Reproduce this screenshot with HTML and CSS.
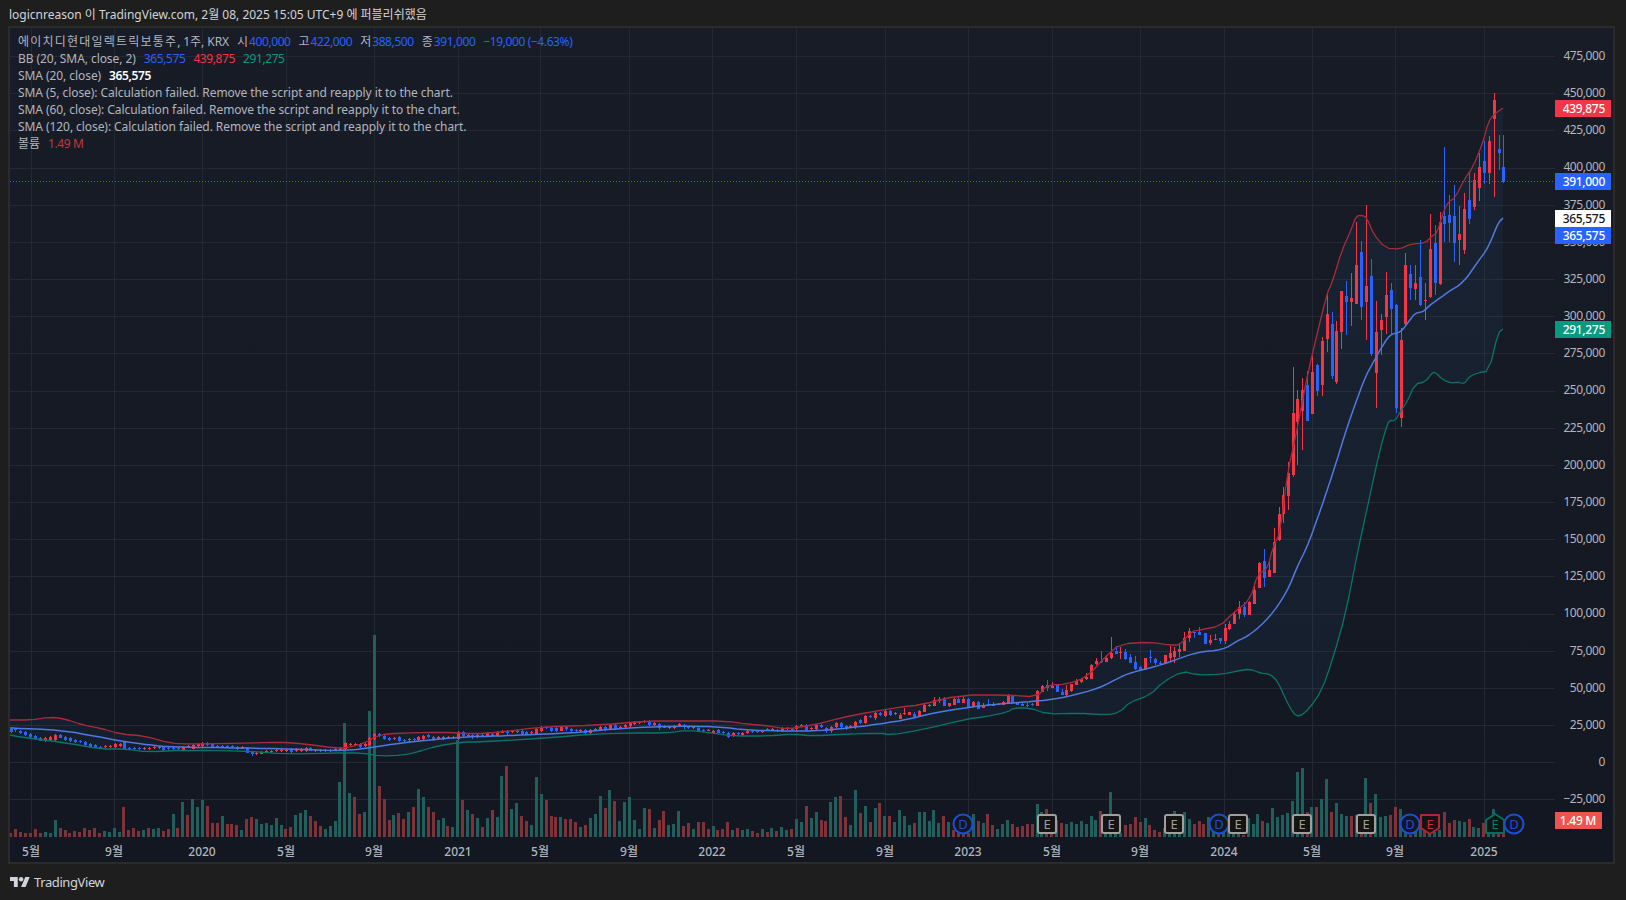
FILE: index.html
```html
<!DOCTYPE html>
<html lang="ko">
<head>
    <meta charset="UTF-8">
    <title>에이치디현대일렉트릭보통주 차트</title>
    <link rel="stylesheet" href="styles.css">
</head>
<body>

<div class="top-bar">logicnreason 이 TradingView.com, 2월 08, 2025 15:05 UTC+9 에 퍼블리쉬했음</div>

<div class="chart-box">
    <div class="pane">
        <svg id="chart" class="plot" viewBox="10 28 1545 809" width="1545" height="809"></svg>

        <div class="legend">
            <div class="legend-row">
                <span><span class="hangul">에이치디현대일렉트릭보통주</span>, 1주, KRX</span>
                <span class="ohlc">시<b class="blue">400,000</b></span>
                <span class="ohlc">고<b class="blue">422,000</b></span>
                <span class="ohlc">저<b class="blue">388,500</b></span>
                <span class="ohlc">종<b class="blue">391,000</b></span>
                <b class="blue">−19,000 (−4.63%)</b>
            </div>
            <div class="legend-row">
                <span>BB (20, SMA, close, 2)</span>
                <b class="blue">365,575</b>
                <b class="red">439,875</b>
                <b class="green">291,275</b>
            </div>
            <div class="legend-row">
                <span>SMA (20, close)</span>
                <b class="white">365,575</b>
            </div>
            <div class="legend-row">SMA (5, close): Calculation failed. Remove the script and reapply it to the chart.</div>
            <div class="legend-row">SMA (60, close): Calculation failed. Remove the script and reapply it to the chart.</div>
            <div class="legend-row">SMA (120, close): Calculation failed. Remove the script and reapply it to the chart.</div>
            <div class="legend-row">
                <span>볼륨</span>
                <b class="dim-red">1.49 M</b>
            </div>
        </div>
    </div>

    <div class="price-axis">
        <div class="price-labels">
            <span>475,000</span>
            <span>450,000</span>
            <span>425,000</span>
            <span>400,000</span>
            <span>375,000</span>
            <span>350,000</span>
            <span>325,000</span>
            <span>300,000</span>
            <span>275,000</span>
            <span>250,000</span>
            <span>225,000</span>
            <span>200,000</span>
            <span>175,000</span>
            <span>150,000</span>
            <span>125,000</span>
            <span>100,000</span>
            <span>75,000</span>
            <span>50,000</span>
            <span>25,000</span>
            <span>0</span>
            <span>−25,000</span>
        </div>
        <div class="tag tag-upper">439,875</div>
        <div class="tag tag-last">391,000</div>
        <div class="tag tag-sma">365,575</div>
        <div class="tag tag-basis">365,575</div>
        <div class="tag tag-lower">291,275</div>
        <div class="tag tag-volume">1.49 M</div>
    </div>

    <div id="timeAxis" class="time-axis"></div>
</div>

<div class="footer">
    <svg class="tv-logo" viewBox="0 4 36 18" width="20" height="10">
        <path d="M14 22H7V11H0V4h14v18zM28 22h-8l7.5-18h8L28 22z"/>
        <circle cx="20" cy="8" r="4"/>
    </svg>
    <span>TradingView</span>
</div>

<script src="chart.js"></script>
</body>
</html>
```

FILE: styles.css
```css
* {
    margin: 0;
    padding: 0;
    box-sizing: border-box;
}

body {
    width: 1626px;
    height: 900px;
    overflow: hidden;
    background: #1e1e1e;
    color: #b2b5be;
    font-family: "Noto Sans", "Noto Sans CJK KR", sans-serif;
    font-size: 12px;
}

.top-bar {
    height: 26px;
    padding-left: 9px;
    line-height: 29px;
    color: #d1d4dc;
}

.chart-box {
    position: relative;
    width: 1607px;
    height: 838px;
    margin-left: 8px;
    border: 2px solid #2b2b2b;
    background: linear-gradient(#181c27, #131722);
    display: grid;
    grid-template-columns: 1545px 58px;
    grid-template-rows: 809px 25px;
}

.pane {
    position: relative;
    grid-column: 1;
    grid-row: 1;
}

.plot {
    display: block;
}

.legend {
    position: absolute;
    top: 5px;
    left: 8px;
    line-height: 17px;
    letter-spacing: -0.07px;
}

.legend-row {
    display: flex;
    gap: 8px;
    height: 17px;
    white-space: nowrap;
}

.legend b {
    font-weight: 400;
    letter-spacing: -0.4px;
}

.hangul {
    letter-spacing: 1.2px;
}

.ohlc b {
    margin-left: 1px;
}

.blue { color: #2962ff; }
.red { color: #f23645; }
.green { color: #089981; }
.legend .white { color: #ffffff; font-weight: 600; }
.dim-red { color: #c2383f; }

.price-axis {
    position: relative;
    overflow: hidden;
    grid-column: 2;
    grid-row: 1 / 3;
}

.price-labels {
    display: flex;
    flex-direction: column;
    padding-top: 9px;
    padding-right: 8px;
    text-align: right;
    letter-spacing: -0.4px;
}

.price-labels span {
    height: 37.17px;
    line-height: 37.17px;
}

.tag {
    position: absolute;
    left: 0;
    width: 56px;
    height: 17px;
    line-height: 17px;
    padding-right: 6px;
    text-align: right;
    color: #ffffff;
    font-weight: 500;
    letter-spacing: -0.3px;
}

.tag-upper { top: 72px; background: #f23645; }
.tag-last { top: 145px; background: #2962ff; }
.tag-sma { top: 182px; background: #ffffff; color: #131722; }
.tag-basis { top: 199px; background: #2962ff; }
.tag-lower { top: 293px; background: #089981; }
.tag-volume { top: 784px; width: 47px; background: #ef5350; }

.time-axis {
    position: relative;
    grid-column: 1;
    grid-row: 2;
    line-height: 30px;
    font-weight: 500;
}

.time-axis span {
    position: absolute;
    top: 0;
    transform: translateX(-50%);
}

.footer {
    display: flex;
    align-items: center;
    gap: 4px;
    height: 36px;
    padding-left: 10px;
    color: #d1d4dc;
    font-size: 13px;
    letter-spacing: -0.4px;
}

.tv-logo {
    fill: #d1d4dc;
}
```

FILE: chart.js
```js
// price scale of the pane, in page pixels
function yOf(price) {
    return 762.3 - price * 1.4867 / 1000;
}

// traced from the chart. x, y are page pixels after x0 + x / k, y0 + y / k
// candle: colour + x, then top,bottom of the body, or high,top,bottom,low
const candleParts = [
    { x0: 0, y0: 620, k: 3, data: "b35,326,335 b47,326,331 b62,334,339 b77,336,344 b92,343,352 b107,348,356 b122,355,362 r137,354,362 r152,352,360 r167,344,360 b182,346,353 b197,351,360 b212,355,363 b227,360,365 b242,362,365 b257,366,375 b272,373,380 b287,376,383 b302,380,382 r317,378,380 r330,378,380 r345,373,381 r360,371,378 b373,366,388 b388,383,386 b403,384,386 b418,384,386 r433,384,386 r448,384,386 r463,381,385 r478,380,382 b490,381,390 b505,385,388 b520,385,388 b535,385,388 r550,381,389 r565,378,382 r580,376,386 r595,373,378 r607,368,378 b622,368,374 b637,372,380 b652,378,382 b667,378,382 b682,377,380 b697,378,382 b712,380,387 r727,382,386 b742,385,398 b757,395,403 r769,398,401 r784,397,401 r799,394,398 r814,392,395 r829,390,392 r844,390,392 r859,390,392 b874,386,395 r889,387,392 r904,387,392 r919,383,392 b931,385,392 r946,390,392 r961,390,392 r976,390,392 r991,390,392 r1006,388,391 r1021,385,390 r1036,370,388 r1051,372,375 r1066,372,374 b1081,373,382 r1096,372,377 r1108,353,375 r1123,342,356 b1138,343,348 b1153,348,358 b1168,353,359 r1183,353,357 b1198,352,363 b1213,360,362 r1228,356,361 b1243,357,360 r1255,350,360 r1270,347,357 b1285,345,350 b1300,350,359 r1315,352,357 r1330,350,356 r1345,350,354 r1360,350,353 r1375,335,357 b1390,335,347 r1405,345,348 b1417,344,352 r1432,345,352" },
    { x0: 480, y0: 690, k: 3, data: "b7,135,137 r22,130,138 b37,131,138 r52,127,137 r67,124,128 b82,122,130 r97,124,127 r112,122,124 b127,122,132 b139,126,131 r154,126,129 r169,116,132 r184,110,122 b199,110,112 b214,113,122 b229,113,122 r244,112,122 b259,110,118 b274,116,122 b289,120,122 r301,120,122 b316,120,130 r331,119,130 r346,116,120 r361,110,119 b376,110,118 r391,106,118 b406,106,117 r421,112,114 r436,105,112 r451,98,109 r463,96,102 r478,97,100 r493,93,97 b508,94,106 r523,99,106 b538,101,115 b553,109,113 r568,112,115 r583,107,113 r598,103,108 b613,104,112 b625,112,115 r640,112,114 b655,113,123 b670,119,121 r685,121,122 r700,122,128 b715,121,128 b730,125,127 b745,128,140 r760,128,136 b775,128,132 r787,128,134 r802,122,129 b817,122,125 b832,122,125 r847,122,126 b862,118,120 r877,118,122 b892,119,122 r907,114,122 r922,114,116 b937,116,119 r949,107,118 r964,106,109 b979,106,120 r994,114,117 r1009,106,118 b1024,106,112 b1039,113,124 r1054,110,124 r1069,100,112 b1084,100,112 b1099,108,116 r1111,108,112 r1126,95,112 b1141,90,100 r1156,78,98 b1171,78,82 r1186,68,85 b1201,70,76 r1216,64,78 b1231,64,76 r1246,70,72" },
    { x0: 900, y0: 590, k: 3, data: "r0,370,375,388,388 r13,355,368,372,375 r28,367,367,375,376 b43,367,372,382,382 r58,360,362,378,378 r73,340,345,366,367 r88,342,346,347,350 r103,322,330,348,348 r118,320,327,333,338 b133,322,323,348,348 r148,340,340,348,352 r163,324,326,345,345 b175,318,326,338,338 r190,318,327,338,340 b205,324,327,352,354 r220,333,337,350,352 b235,333,336,357,357 r250,340,344,354,355 b265,327,343,346,347 b280,337,345,346,347 r295,340,343,345,347 r310,332,337,344,345 r325,312,314,341,342 b337,315,315,340,340 b352,335,337,344,345 b367,337,342,347,349 b382,338,344,346,350 b397,338,342,345,348 r412,300,303,347,347 r427,286,288,305,307 b442,270,285,295,303 r457,277,287,293,295 b472,282,284,307,307 b487,297,306,315,315 r499,285,300,315,317 r514,282,283,303,305 r529,268,272,284,285 r544,265,268,276,280 r559,250,262,268,270 r574,222,226,267,268 r589,205,212,223,225 b604,183,212,216,218 r619,195,203,215,217 r634,140,190,204,207 b649,168,183,191,193 r661,172,185,186,207 b676,177,186,206,211" },
    { x0: 0, y0: 0, k: 1, data: "b1130,654,657,663,663 b1135,656,662,669,670 b1140,666,667,670,671 r1145,658,658,669,670 b1150,650,657,658,663 b1155,658,659,663,665 b1160,661,663,664,665 r1165,655,655,663,663 r1170,646,653,658,661 r1174,647,651,657,663 r1179,643,649,652,657 r1184,632,638,651,651 r1189,628,631,638,642 b1194,632,632,633,638 b1199,627,632,635,635 b1205,633,633,644,644 r1210,635,640,643,645 r1215,634,639,640,640 b1220,638,638,641,644 r1225,624,628,641,644 r1229,621,624,629,630 r1234,611,614,624,624 r1239,601,607,614,619 b1244,602,607,615,617 r1249,601,602,615,615 r1254,583,590,604,604 r1259,562,563,588,588 b1264,549,561,578,587 r1269,559,570,577,577 r1274,528,542,573,573 r1279,507,514,540,541 r1283,487,495,514,523 r1288,462,473,496,510 r1293,367,413,475,477 r1297,390,399,422,465 r1302,378,390,411,450 b1307,371,385,421,421 r1312,353,372,414,414 b1317,364,365,391,396 r1322,337,341,385,396 r1327,294,314,339,352 b1332,312,324,376,379 r1336,321,331,382,384 r1341,291,291,332,349 b1346,281,296,302,335 r1351,273,298,302,326 r1356,222,265,304,304 b1361,241,252,307,320 r1366,205,286,302,340 b1371,259,276,354,356 r1376,301,332,373,408 r1381,314,320,330,355 r1386,272,295,317,334 b1391,283,290,309,334 b1396,304,305,408,413 r1401,328,340,418,427 r1405,253,265,324,325 b1410,265,274,288,300 r1415,265,283,289,300 b1420,240,277,305,306 r1425,283,300,301,320 r1430,214,249,297,298 b1435,225,243,283,295 r1440,212,222,284,285 b1444,147,216,224,242 b1449,195,215,223,242 b1454,185,216,243,262 r1459,206,234,240,265 r1464,193,209,250,254 b1469,172,200,219,224 r1474,173,180,207,210 r1479,153,167,188,201 b1484,141,161,173,184 r1489,136,141,173,184 r1494,93,100,119,197 b1499,135,149,153,170 b1503,135,167,182,183" }
];

// volume: colour + x, then top of the bar
const volumeParts = [
    { x0: 0, y0: 620, data: "r31,640 r46,627 r61,636 r76,639 r91,639 r106,627 r121,639 g136,636 g151,639 g166,600 r181,624 r196,630 r208,639 r223,633 r238,636 r253,624 r268,630 r283,624 r298,639 g313,633 g328,636 g343,624 g358,636 r370,561 r385,630 r400,624 r415,633 g430,630 r445,624 g460,627 g475,624 r490,633 r505,627 g520,582 r532,624 g547,546 r562,585 g577,537 g592,561 g607,540 r622,558 r637,609 r652,609 g667,588 r682,612 r694,612 r709,615 g724,630 r739,597 r754,591 g769,597 g784,612 g799,609 g814,615 g829,594 g844,615 r856,627 r871,621 g886,585 g901,579 g916,570 r931,588 r946,603 r961,618 g976,627 g991,618 g1006,603 g1018,486 g1033,309 g1048,519 r1063,531 r1078,582 g1093,576 g1108,273 g1123,45 r1138,498 r1153,537 r1168,600 g1180,585 r1195,579 r1210,597 g1225,576 r1240,561 g1255,507 g1270,531 r1285,561 r1300,576 g1315,600 g1330,594 r1342,618 g1357,621 g1372,360 r1387,540 g1402,570 r1417,582 g1432,594" },
    { x0: 480, y0: 700, data: "r7,381 g22,354 r37,330 g52,351 g64,228 r79,198 g94,327 g109,309 r124,348 r139,363 g154,375 g169,231 g184,282 r199,300 r214,348 r226,351 g241,351 r256,357 r271,357 r286,366 g301,381 r316,375 g331,354 g346,342 g361,288 r376,324 g388,270 r403,303 g418,363 g433,306 g448,291 g463,360 g478,387 g493,324 r508,327 g523,384 r538,360 r550,333 g565,375 g580,372 g595,333 r610,378 r625,369 g640,387 r655,366 r670,366 r685,387 g700,378 r712,390 r727,387 r742,366 g757,390 r772,384 g787,390 g802,387 r817,393 r832,399 g847,387 r862,396 g874,384 r889,393 g904,381 g919,390 r934,387 g949,357 g964,366 r979,318 g994,354 g1009,336 r1024,360 r1036,363 g1051,306 g1066,291 r1081,288" },
    { x0: 820, y0: 770, data: "r76,141 g91,165 g106,60 r121,129 g136,108 r151,156 g166,114 r178,99 g193,138 r208,138 g223,156 g238,120 g253,138 g268,165 r283,159 g298,126 g313,126 g328,153 g340,120 g355,159 r370,138 g385,156 r400,180 r415,190 r430,190 r445,190 g460,132 r475,153 g490,159 r502,132 r517,165 g532,177 g547,162 g562,150 r577,162 r592,171 r607,168 r622,162 r637,162 g652,102 g664,126 r679,117 r694,150 g709,150 r724,159 g739,162 g754,156 g769,162 g784,153 g799,162 g814,138 g826,150 r841,123 g856,190 g871,66 g886,190 g901,190 r916,165 r931,162 r946,141 r961,156 g976,144 r988,165 r1003,180" },
    { x0: 1150, y0: 740, data: "r28,276 g43,264 g58,270 g73,213 g88,260 g103,216 g118,237 r133,252 r148,243 r160,252 g175,231 g190,240 r205,280 g220,270 g235,250 g250,270 g265,280 r280,285 g295,235 g310,252 g322,222 r337,243 g352,249 g367,204 g382,231 g397,225 g412,219 g427,183 g442,96 g457,84 r472,216 g484,201 r499,201 g514,177 g529,117 r544,216 g559,189 g574,222 g589,228 r604,228 g619,225 r634,225 g646,114 r661,189 g676,162 g691,231 g706,228 r721,225 r736,201 g751,207 g766,235 r781,285 g796,240 g811,240 r823,265 g838,270 g853,275 g868,270 r883,216 r898,249 r913,240 g928,243 g943,246 r958,237 g970,261 g985,264 r1000,250 g1015,250 g1030,207 r1045,270 r1060,280" }
];

const upperBand = [[10,720],[30,720],[50,717],[65,719],[83,725],[100,728],[120,734],[145,736],[170,743],[190,744],[245,743],[280,742],[305,744],[335,748],[345,748],[365,743],[378,735],[400,733],[440,732],[475,734],[500,732],[540,727],[600,725],[647,721],[680,721],[727,721],[747,724],[770,726],[787,729],[813,725],[840,718],[870,712],[900,707],[920,705],[960,695],[1008,695],[1037,697],[1047,685],[1067,684],[1087,677],[1107,655],[1120,644],[1150,642],[1170,645],[1180,645],[1192,631],[1200,630],[1220,626],[1233,613],[1250,600],[1258,573],[1267,570],[1273,547],[1280,533],[1287,475],[1297,430],[1305,387],[1312,355],[1327,293],[1332,283],[1342,250],[1351,230],[1356,216],[1362,215],[1367,218],[1373,233],[1385,248],[1400,249],[1410,244],[1425,243],[1432,236],[1437,233],[1443,213],[1448,202],[1455,198],[1465,178],[1473,167],[1483,142],[1488,123],[1493,115],[1503,108]];

const basisLine = [[10,728],[60,730],[100,737],[120,741],[150,745],[170,747],[245,748],[290,749],[345,751],[375,747],[400,743],[460,737],[500,736],[520,735],[573,733],[613,729],[647,727],[687,726],[720,727],[747,730],[780,731],[813,731],[840,729],[880,724],[910,719],[933,713],[970,707],[1010,703],[1040,701],[1067,697],[1100,688],[1120,677],[1133,672],[1150,668],[1167,663],[1197,652],[1223,650],[1237,641],[1250,635],[1270,617],[1287,592],[1297,567],[1307,547],[1317,520],[1333,473],[1347,427],[1365,377],[1373,363],[1380,350],[1390,334],[1400,333],[1410,320],[1415,313],[1423,312],[1430,305],[1440,298],[1448,292],[1463,283],[1477,263],[1488,248],[1498,223],[1503,218]];

const lowerBand = [[10,735],[20,737],[67,743],[100,749],[127,749],[147,752],[187,750],[247,751],[287,754],[333,753],[363,753],[380,756],[403,755],[417,752],[437,746],[463,742],[480,742],[547,738],[593,734],[627,733],[667,733],[687,730],[713,733],[733,736],[767,736],[793,734],[813,736],[847,734],[880,733],[890,735],[920,730],[967,719],[983,717],[1008,712],[1013,708],[1030,708],[1047,714],[1077,713],[1107,715],[1120,712],[1130,702],[1150,695],[1163,682],[1183,671],[1197,675],[1223,674],[1237,671],[1250,669],[1260,673],[1270,674],[1278,682],[1286,700],[1293,713],[1299,717],[1309,709],[1322,690],[1333,658],[1346,612],[1358,550],[1365,518],[1376,467],[1381,446],[1385,432],[1389,420],[1395,421],[1400,412],[1407,402],[1415,384],[1425,382],[1432,373],[1435,372],[1443,380],[1452,383],[1458,382],[1464,384],[1469,377],[1477,373],[1489,371],[1498,333],[1503,329]];

const timeTicks = [[31,"5월"],[114,"9월"],[202,"2020"],[286,"5월"],[374,"9월"],[458,"2021"],[540,"5월"],[629,"9월"],[712,"2022"],[796,"5월"],[885,"9월"],[968,"2023"],[1052,"5월"],[1140,"9월"],[1224,"2024"],[1312,"5월"],[1395,"9월"],[1484,"2025"]];

// earnings and dividend flags along the bottom of the pane
const markers = [["D",963],["E",1047],["E",1111],["E",1174],["D",1219],["E",1238],["E",1302],["E",1366],["D",1410],["E-down",1430],["E-up",1495],["D",1514]];

const MARKER_Y = 824;
const VOLUME_BASE = 837;

function rect(x, y, w, h, fill) {
    return `<rect x="${x}" y="${y}" width="${w}" height="${h}" fill="${fill}"/>`;
}

function line(x1, y1, x2, y2, cls) {
    return `<line x1="${x1}" y1="${y1}" x2="${x2}" y2="${y2}" class="${cls}"/>`;
}

function points(list) {
    return list.map(p => p.map(v => v.toFixed(1)).join(",")).join(" ");
}

// round the corners of a traced line, keeping its two ends
function smooth(list) {
    const out = [list[0]];
    for (let i = 0; i < list.length - 1; i++) {
        const a = list[i];
        const b = list[i + 1];
        out.push([a[0] * 0.75 + b[0] * 0.25, a[1] * 0.75 + b[1] * 0.25]);
        out.push([a[0] * 0.25 + b[0] * 0.75, a[1] * 0.25 + b[1] * 0.75]);
    }
    out.push(list[list.length - 1]);
    return out;
}

function drawGrid() {
    let out = "";
    for (let price = -25000; price <= 475000; price += 25000) {
        const y = Math.round(yOf(price)) + 0.5;
        out += line(10, y, 1555, y, "grid");
    }
    timeTicks.forEach(t => {
        out += line(t[0] + 0.5, 28, t[0] + 0.5, 837, "grid");
    });
    return out;
}

function drawVolume() {
    let out = "";
    volumeParts.forEach(part => {
        part.data.split(" ").forEach(tok => {
            const [head, top] = tok.split(",");
            const x = Math.floor(part.x0 + head.slice(1) / 3);
            const y = Math.round(part.y0 + top / 3);
            out += rect(x - 1, y, 3, VOLUME_BASE - y, head[0] === "r" ? "#7f3338" : "#215f5d");
        });
    });
    return out;
}

function drawCandles() {
    let out = "";
    candleParts.forEach(part => {
        part.data.split(" ").forEach(tok => {
            const [head, ...rest] = tok.split(",");
            const ys = rest.map(v => part.y0 + v / part.k);
            const [high, top, bottom, low] = ys.length === 4 ? ys : [ys[0] - 1, ys[0], ys[1], ys[1] + 1];
            const x = Math.floor(part.x0 + head.slice(1) / part.k);
            const color = head[0] === "r" ? "#f23645" : "#2962ff";
            const yTop = Math.round(top);
            out += rect(x, Math.round(high), 1, Math.max(1, Math.round(low - high)), color);
            out += rect(x - 1, yTop, 3, Math.max(1, Math.round(bottom) - yTop), color);
        });
    });
    return out;
}

function drawMarker(kind, x) {
    const y = MARKER_Y;
    if (kind === "D") {
        return `<circle cx="${x}" cy="${y}" r="9.5" class="mk-dividend"/>` +
            `<text x="${x}" y="${y + 4.5}" class="mk-text mk-text-blue">D</text>`;
    }
    if (kind === "E-down") {
        return `<path d="M${x - 9} ${y - 9}h18v13l-9 6l-9 -6z" class="mk-red"/>` +
            `<text x="${x}" y="${y + 4.5}" class="mk-text mk-text-red">E</text>`;
    }
    if (kind === "E-up") {
        return `<path d="M${x - 9} ${y + 9}h18v-13l-9 -6l-9 6z" class="mk-green"/>` +
            `<text x="${x}" y="${y + 4.5}" class="mk-text mk-text-green">E</text>`;
    }
    return `<rect x="${x - 9}" y="${y - 9}" width="18" height="18" rx="2" class="mk-grey"/>` +
        `<text x="${x}" y="${y + 4.5}" class="mk-text mk-text-grey">E</text>`;
}

function drawChart() {
    const yLast = Math.round(yOf(391000)) + 0.5;
    const upper = smooth(upperBand);
    const lower = smooth(lowerBand);
    const basis = smooth(smooth(basisLine));
    const band = upper.concat(lower.slice().reverse());

    let out = `<style>
        .grid { stroke: #242833; stroke-width: 1; }
        .bb { fill: none; stroke-width: 1.3; stroke-linejoin: round; }
        .mk-dividend { fill: #131722; stroke: #1d4fd1; stroke-width: 2; }
        .mk-grey { fill: #141414; stroke: #a09f9b; stroke-width: 2; }
        .mk-red { fill: #141414; stroke: #b3252f; stroke-width: 2; stroke-linejoin: round; }
        .mk-green { fill: #141414; stroke: #00705f; stroke-width: 2; stroke-linejoin: round; }
        .mk-text { font-size: 13px; text-anchor: middle; }
        .mk-text-blue { fill: #1d4fd1; }
        .mk-text-grey { fill: #a09f9b; }
        .mk-text-red { fill: #c9303c; }
        .mk-text-green { fill: #00806c; }
    </style>`;

    out += drawGrid();
    out += `<polygon points="${points(band)}" fill="rgba(60,160,243,0.055)"/>`;
    out += drawVolume();
    out += drawCandles();
    out += `<polyline points="${points(upper)}" class="bb" stroke="#a62c3b"/>`;
    out += `<polyline points="${points(lower)}" class="bb" stroke="#0b7466"/>`;
    out += `<polyline points="${points(basis)}" class="bb" stroke="#5179de" style="stroke-width:1.5"/>`;
    out += `<line x1="10" y1="${yLast}" x2="1555" y2="${yLast}" stroke="#2962ff" stroke-dasharray="1 2"/>`;
    markers.forEach(m => { out += drawMarker(m[0], m[1]); });

    document.getElementById("chart").innerHTML = out;
}

function drawTimeAxis() {
    const axis = document.getElementById("timeAxis");
    timeTicks.forEach(t => {
        const label = document.createElement("span");
        label.textContent = t[1];
        label.style.left = (t[0] - 10) + "px";
        axis.appendChild(label);
    });
}

drawChart();
drawTimeAxis();
```
